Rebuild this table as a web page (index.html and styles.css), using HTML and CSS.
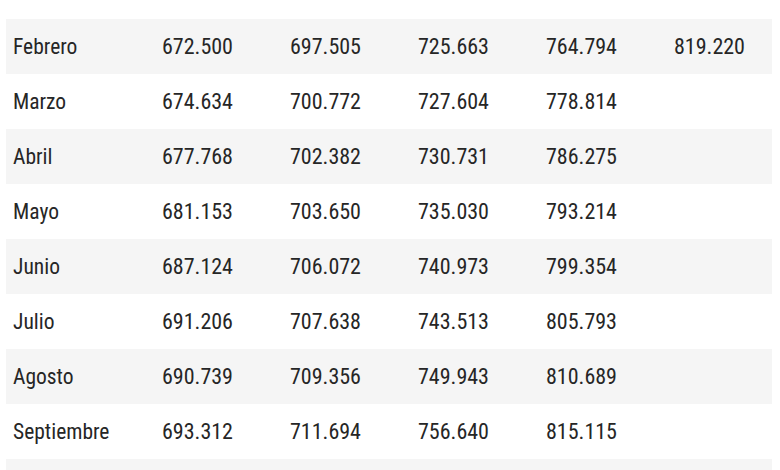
FILE: index.html
```html
<!DOCTYPE html>
<html lang="es">
<head>
<meta charset="utf-8">
<link rel="stylesheet" href="styles.css">
</head>
<body>
<div class="wrap">
<table class="data">
<colgroup><col class="c1"><col class="cn"><col class="cn"><col class="cn"><col class="cn"><col></colgroup>
<tbody>
<tr><td>Enero</td><td class="num">669.950</td><td class="num">694.848</td><td class="num">721.598</td><td class="num">757.800</td><td class="num">819.166</td></tr>
<tr><td>Febrero</td><td class="num">672.500</td><td class="num">697.505</td><td class="num">725.663</td><td class="num">764.794</td><td class="num">819.220</td></tr>
<tr><td>Marzo</td><td class="num">674.634</td><td class="num">700.772</td><td class="num">727.604</td><td class="num">778.814</td><td></td></tr>
<tr><td>Abril</td><td class="num">677.768</td><td class="num">702.382</td><td class="num">730.731</td><td class="num">786.275</td><td></td></tr>
<tr><td>Mayo</td><td class="num">681.153</td><td class="num">703.650</td><td class="num">735.030</td><td class="num">793.214</td><td></td></tr>
<tr><td>Junio</td><td class="num">687.124</td><td class="num">706.072</td><td class="num">740.973</td><td class="num">799.354</td><td></td></tr>
<tr><td>Julio</td><td class="num">691.206</td><td class="num">707.638</td><td class="num">743.513</td><td class="num">805.793</td><td></td></tr>
<tr><td>Agosto</td><td class="num">690.739</td><td class="num">709.356</td><td class="num">749.943</td><td class="num">810.689</td><td></td></tr>
<tr><td>Septiembre</td><td class="num">693.312</td><td class="num">711.694</td><td class="num">756.640</td><td class="num">815.115</td><td></td></tr>
<tr><td>Octubre</td><td class="num">695.178</td><td class="num">713.945</td><td class="num">759.118</td><td class="num">817.022</td><td></td></tr>
</tbody>
</table>
</div>
</body>
</html>
```
FILE: styles.css
```css
html, body {
  margin: 0;
  padding: 0;
  background: #ffffff;
}
body {
  font-family: "Roboto Condensed", "Roboto", sans-serif;
  font-stretch: 75%;
  color: #262626;
  overflow: hidden;
}
.wrap {
  margin-top: -36px;
  padding: 0 8px 0 6px;
}
.data {
  width: 766px;
  border-collapse: collapse;
  table-layout: fixed;
}
.c1 { width: 149px; }
.cn { width: 128px; }
.data td {
  height: 55px;
  padding: 0 0 0 7px;
  font-size: 21.5px;
  vertical-align: middle;
  white-space: nowrap;
}
.data td.num {
  font-size: 22px;
}
.data tr:nth-child(even) td {
  background: #f5f5f5;
}
```
